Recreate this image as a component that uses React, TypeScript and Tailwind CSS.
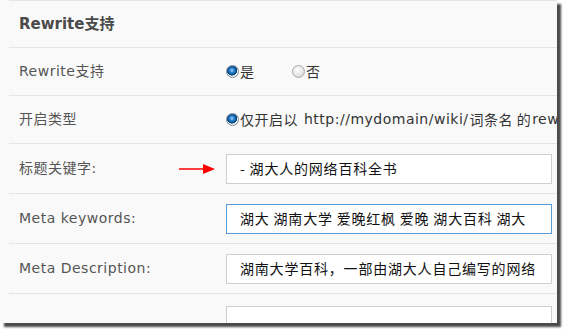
import React from "react";

const font = { fontFamily: '"DejaVu Sans", Verdana, "Noto Sans CJK SC", sans-serif' };
const cjk = { fontFamily: '"Noto Sans CJK SC", "DejaVu Sans", sans-serif' };

function Radio({ checked }: { checked?: boolean }) {
  return (
    <span
      className={
        "inline-block w-[13px] h-[13px] rounded-full border shrink-0 " +
        (checked
          ? "border-[#7c8a99] bg-[radial-gradient(circle_at_45%_40%,#9fd4ff_0%,#1976c2_30%,#0b3f73_55%,#e4e8ec_60%,#ffffff_100%)]"
          : "border-[#a8a8a8] bg-[radial-gradient(circle_at_40%_35%,#ffffff_0%,#e6e6e6_55%,#c8c8c8_100%)]")
      }
    />
  );
}

function Row({ label, children, h = "h-[48px]" }: { label: string; children?: React.ReactNode; h?: string }) {
  return (
    <div className={"flex items-center border-b border-[#e4e4e4] " + h}>
      <div className="w-[217px] shrink-0 pl-[10px] text-[14px] tracking-[0.5px] text-[#555]" style={font}>{label}</div>
      <div className="flex-1 min-w-0 flex items-center">{children}</div>
    </div>
  );
}

function Field({ value, focus }: { value: string; focus?: boolean }) {
  return (
    <div
      className={
        "w-[326px] h-[30px] shrink-0 bg-white border flex items-center pl-[13px] overflow-hidden whitespace-nowrap text-[14px] tracking-[0.8px] text-[#111] " +
        (focus ? "border-[#5b9dd9]" : "border-[#cfcfcf]")
      }
      style={cjk}
    >
      {value}
    </div>
  );
}

export default function App() {
  return (
    <div className="w-[564px] h-[329px] bg-white overflow-hidden">
      <div className="w-[557px] h-[323px] bg-[#f9f9f9] overflow-hidden shadow-[4px_4px_2px_#4a4a4a] pl-[9px]">
        <div className="border-t border-[#e4e4e4]">
          <div className="h-[47px] flex items-center border-b border-[#e4e4e4] pl-[10px] text-[15px] font-bold text-[#4a4a4a]" style={font}>
            Rewrite支持
          </div>
          <Row label="Rewrite支持">
            <div className="flex items-center gap-[1px] text-[14px] text-[#333]" style={cjk}>
              <Radio checked />
              <span>是</span>
            </div>
            <div className="flex items-center gap-[1px] ml-[38px] text-[14px] text-[#333]" style={cjk}>
              <Radio />
              <span>否</span>
            </div>
          </Row>
          <Row label="开启类型">
            <div className="flex items-center gap-[1px] whitespace-nowrap text-[14px] tracking-[0.5px] text-[#333]" style={font}>
              <Radio checked />
              <span style={cjk}>仅开启以</span>
              <span className="ml-[5px]">http://mydomain/wiki/</span>
              <span style={cjk}>词条名 的</span>
              <span>rewrite</span>
            </div>
          </Row>
          <Row label="标题关键字:" h="h-[50px]">
            <div className="relative w-0">
              <svg className="absolute left-[-47px] top-[-6px]" width="36" height="12" viewBox="0 0 36 12">
                <line x1="0" y1="6" x2="26" y2="6" stroke="#ff0000" strokeWidth="1.5" />
                <polygon points="24,1 36,6 24,11" fill="#ff0000" />
              </svg>
            </div>
            <Field value="- 湖大人的网络百科全书" />
          </Row>
          <Row label="Meta keywords:" h="h-[50px]">
            <Field value="湖大 湖南大学 爱晚红枫 爱晚 湖大百科 湖大" focus />
          </Row>
          <Row label="Meta Description:" h="h-[50px]">
            <Field value="湖南大学百科，一部由湖大人自己编写的网络" />
          </Row>
          <div className="flex pt-[12px]">
            <div className="w-[217px]" />
            <div className="w-[326px] h-[30px] bg-white border border-[#cfcfcf]" />
          </div>
        </div>
      </div>
    </div>
  );
}
